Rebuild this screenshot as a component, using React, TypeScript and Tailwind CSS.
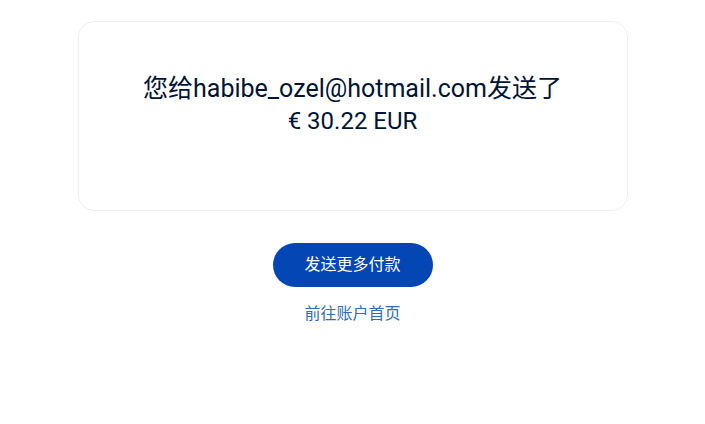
export default function App() {
  return (
    <div
      className="min-h-[424px] w-full bg-white flex flex-col items-center pt-[21px]"
      style={{ fontFamily: 'Roboto, "Noto Sans CJK SC", sans-serif' }}
    >
      <div className="w-[550px] h-[190px] rounded-2xl border border-[#eeeeee] bg-white flex flex-col items-center pt-[50px]">
        <p className="text-[25px] leading-[33px] text-[#001435] text-center">
          您给habibe_ozel@hotmail.com发送了
        </p>
        <p className="text-[24px] leading-[33px] text-[#001435] text-center">€ 30.22 EUR</p>
      </div>

      <button className="mt-[32px] w-[160px] h-[44px] rounded-full bg-[#0546b5] text-white text-[16px]">
        发送更多付款
      </button>

      <a href="#" className="mt-[16px] text-[16px] leading-[22px] text-[#2a6ebb]">
        前往账户首页
      </a>
    </div>
  );
}
